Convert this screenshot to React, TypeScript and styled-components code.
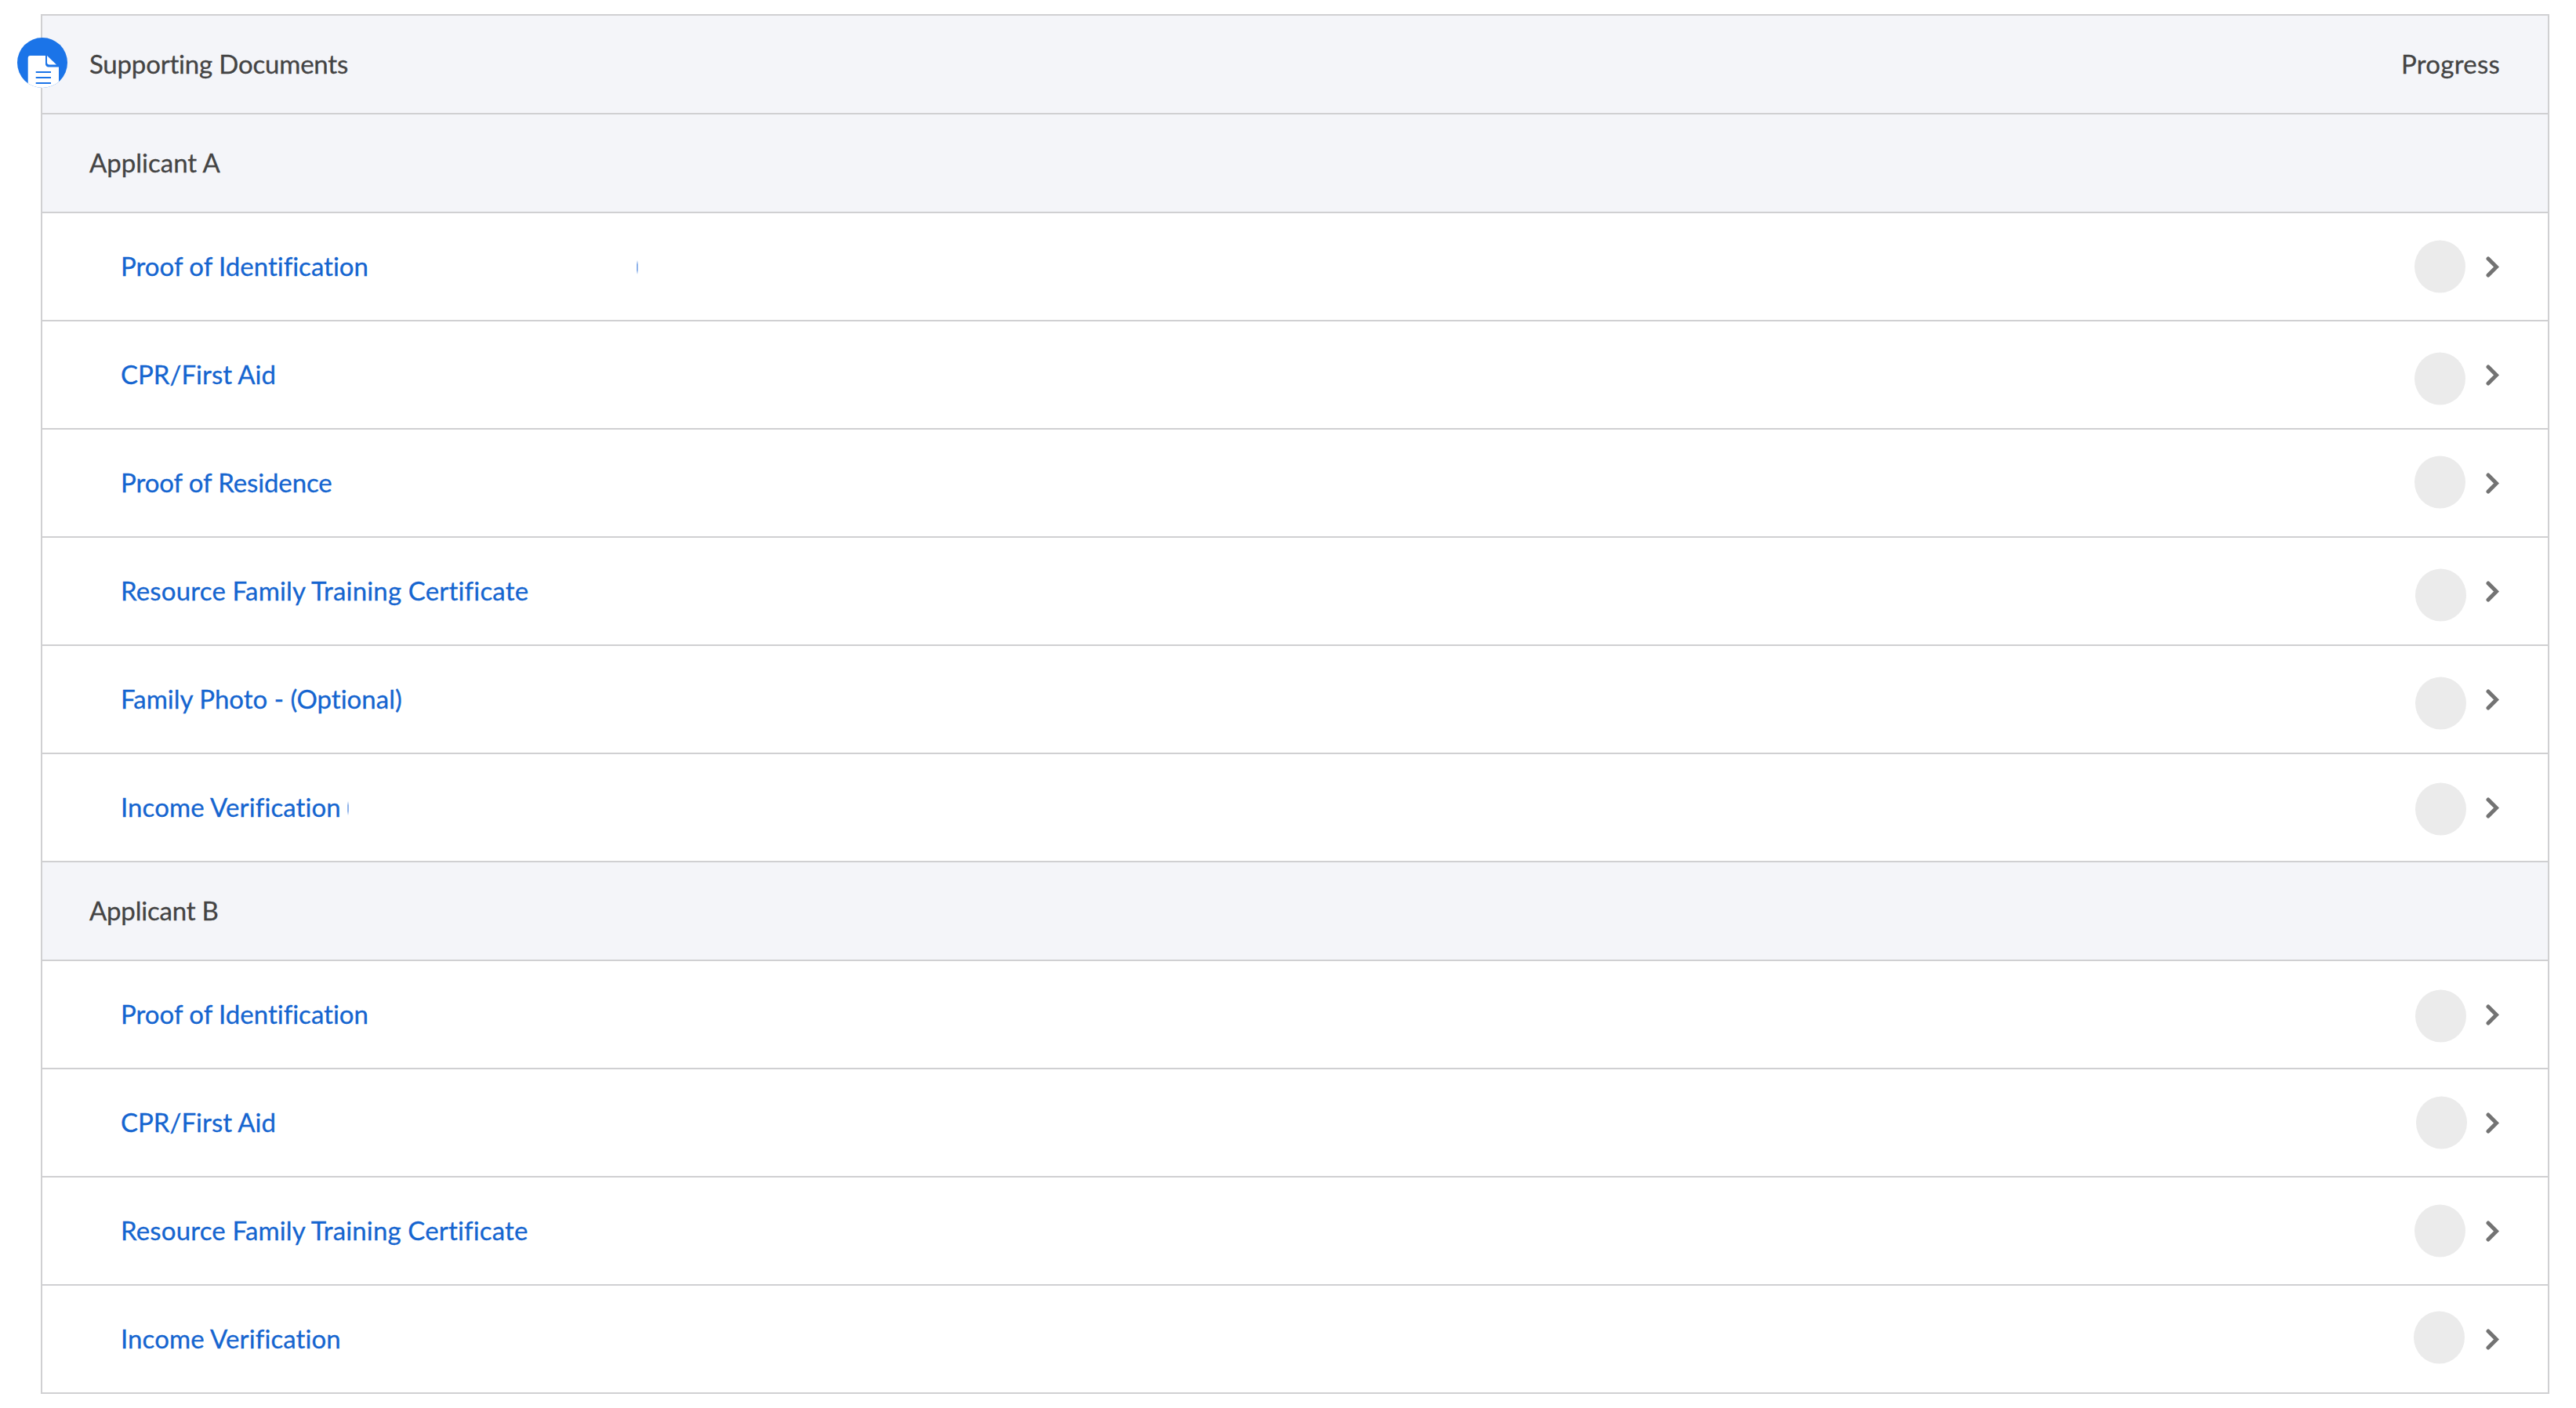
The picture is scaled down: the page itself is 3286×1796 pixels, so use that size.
import React from "react";
import styled, { createGlobalStyle } from "styled-components";

const GlobalStyle = createGlobalStyle`
  html, body {
    margin: 0;
    padding: 0;
    background: #ffffff;
    font-family: "Lato", "Liberation Sans", sans-serif;
  }
`;

const Page = styled.div`
  width: 3286px;
  height: 1796px;
  box-sizing: border-box;
  padding: 18px 34px 0 52px;
`;

const Table = styled.div`
  position: relative;
  border: 2px solid #d0d0d2;
  border-bottom: 0;
`;

const Badge = styled.div`
  position: absolute;
  left: -32px;
  top: 28px;
  width: 64px;
  height: 64px;
`;

const HeadRow = styled.div`
  height: 126px;
  box-sizing: border-box;
  display: flex;
  align-items: center;
  justify-content: space-between;
  padding: 0 61px 2px 60px;
  background: #f4f5f9;
  border-bottom: 2px solid #d0d0d2;
  color: #444444;
  font-size: 33px;
  font-variant-ligatures: none;
  -webkit-text-stroke: 0.3px #444444;
`;

const HeadLabel = styled.span<{ $track?: number }>`
  letter-spacing: ${(p) => p.$track ?? 0}px;
`;

const Row = styled.div`
  position: relative;
  height: 138px;
  box-sizing: border-box;
  display: flex;
  align-items: center;
  padding: 0 62px 0 100px;
  background: #ffffff;
  border-bottom: 2px solid #d0d0d2;
`;

const DocLink = styled.a<{ $track: number }>`
  margin-bottom: 3px;
  color: #1565d0;
  font-size: 33px;
  font-variant-ligatures: none;
  letter-spacing: ${(p) => p.$track}px;
  text-decoration: none;
  white-space: nowrap;
  -webkit-text-stroke: 0.3px #1565d0;
`;

const Sliver = styled.span<{ $left: number }>`
  position: absolute;
  left: ${(p) => p.$left}px;
  top: 60px;
  width: 2px;
  height: 18px;
  background: linear-gradient(transparent, #8fb3ea 30%, #8fb3ea 70%, transparent);
`;

const Status = styled.div`
  margin-left: auto;
  display: flex;
  align-items: center;
  gap: 26px;
`;

const Dot = styled.span<{ $dx: number; $dy: number }>`
  width: 65px;
  height: 67px;
  border-radius: 50%;
  background: #ebebeb;
  transform: translate(${(p) => p.$dx}px, ${(p) => p.$dy}px);
`;

const Chevron = styled.svg`
  width: 17px;
  height: 27px;
  fill: none;
  stroke: #737373;
  stroke-width: 5;
  stroke-linecap: round;
  stroke-linejoin: miter;
`;

type Doc = { name: string; dx: number; dy: number; track?: number; sliver?: number };

const applicantA: Doc[] = [
  { name: "Proof of Identification", dx: 0, dy: -0.5, sliver: 758 },
  { name: "CPR/First Aid", dx: 0, dy: 4.5 },
  { name: "Proof of Residence", dx: 0, dy: -1.5, track: -0.1 },
  { name: "Resource Family Training Certificate", dx: 1, dy: 4.5, track: 0.17 },
  { name: "Family Photo - (Optional)", dx: 1, dy: 4.5 },
  { name: "Income Verification", dx: 1, dy: 1.5, track: 0.1, sliver: 389 },
];

const applicantB: Doc[] = [
  { name: "Proof of Identification", dx: 1, dy: 1.5 },
  { name: "CPR/First Aid", dx: 2, dy: -0.5 },
  { name: "Resource Family Training Certificate", dx: 0, dy: -0.5, track: 0.15 },
  { name: "Income Verification", dx: -1, dy: -2.5, track: 0.1 },
];

const DocRow = ({ name, dx, dy, track = 0, sliver }: Doc) => (
  <Row>
    <DocLink href="#" $track={track}>{name}</DocLink>
    {sliver !== undefined && <Sliver $left={sliver} />}
    <Status>
      <Dot $dx={dx} $dy={dy} />
      <Chevron viewBox="0 0 17 27">
        <path d="M3 3 L13.5 13.5 L3 24" />
      </Chevron>
    </Status>
  </Row>
);

const App = () => (
  <Page>
    <GlobalStyle />
    <Table>
      <Badge>
        <svg viewBox="0 0 64 64" width="64" height="64">
          <defs>
            <clipPath id="badge-clip">
              <circle cx="32" cy="32" r="32" />
            </clipPath>
          </defs>
          <circle cx="32" cy="32" r="32" fill="#1b74e8" />
          <g clipPath="url(#badge-clip)">
            <path d="M13.7 26 a3 3 0 0 1 3-3 H36 V33 a4 4 0 0 0 4 4.5 H53 V64 H13.7 Z" fill="#ffffff" />
            <path d="M38 23 L50 34.5 H41 a3 3 0 0 1-3-3 Z" fill="#ffffff" />
            <path d="M23.7 44 H43 M23.7 51 H43 M23.7 58 H43" stroke="#1b74e8" strokeWidth="2" />
          </g>
        </svg>
      </Badge>
      <HeadRow>
        <HeadLabel $track={-0.2}>Supporting Documents</HeadLabel>
        <HeadLabel $track={0.25}>Progress</HeadLabel>
      </HeadRow>
      <HeadRow>
        <HeadLabel>Applicant A</HeadLabel>
      </HeadRow>
      {applicantA.map((d) => (
        <DocRow key={d.name} {...d} />
      ))}
      <HeadRow>
        <HeadLabel $track={-0.2}>Applicant B</HeadLabel>
      </HeadRow>
      {applicantB.map((d) => (
        <DocRow key={d.name} {...d} />
      ))}
    </Table>
  </Page>
);

export default App;
